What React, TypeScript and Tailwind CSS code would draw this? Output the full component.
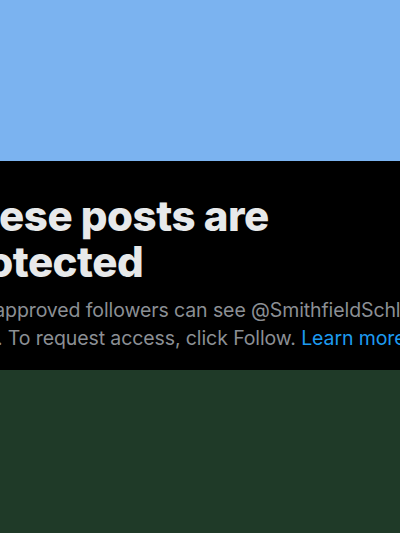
export default function App() {
  return (
    <div className="w-[400px] h-[533px] flex flex-col overflow-hidden font-['Inter',sans-serif]">
      {/* header banner */}
      <div className="h-[161px] bg-[#7bb3f0] shrink-0" />

      {/* protected notice */}
      <div className="h-[209px] bg-black shrink-0 overflow-hidden">
        <div className="w-[640px] pt-[32px]">
          <h2 className="ml-[-55px] text-[42px] leading-[46px] font-extrabold text-[#e7e9ea] tracking-[-0.5px]">
            <span className="block whitespace-nowrap">These posts are</span>
            <span className="block whitespace-nowrap">protected</span>
          </h2>
          <p className="ml-[-53px] mt-[11px] text-[19.5px] leading-[28px] text-[#8b8f94] tracking-[-0.1px]">
            <span className="block whitespace-nowrap">Only approved followers can see @SmithfieldSchl’s</span>
            <span className="block whitespace-nowrap">
              posts. To request access, click Follow.{' '}
              <span className="text-[#1d9bf0]">Learn more</span>
            </span>
          </p>
        </div>
      </div>

      {/* bottom area */}
      <div className="flex-1 bg-[#1f3a28]" />
    </div>
  );
}
